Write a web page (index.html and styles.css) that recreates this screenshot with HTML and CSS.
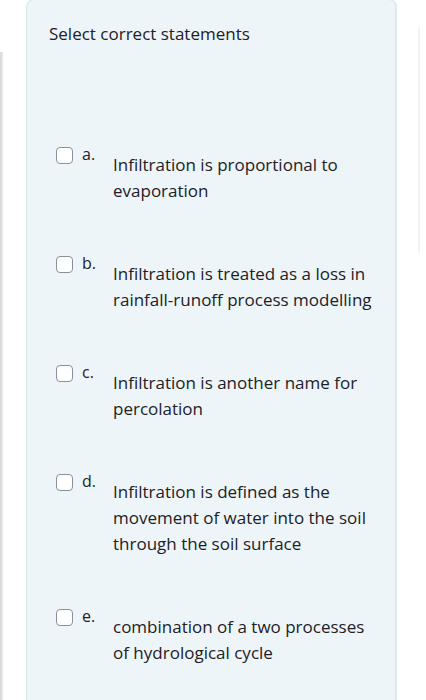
FILE: index.html
```html
<!DOCTYPE html>
<html>
<head>
<meta charset="utf-8">
<link rel="stylesheet" href="styles.css">
</head>
<body>
<div class="page">
  <div class="left-strip"></div>
  <div class="card">
    <div class="question">Select correct statements</div>
    <div class="answers">
      <div class="option">
        <span class="box"></span>
        <span class="letter">a.</span>
        <div class="text">Infiltration is proportional to evaporation</div>
      </div>
      <div class="option">
        <span class="box"></span>
        <span class="letter">b.</span>
        <div class="text">Infiltration is treated as a loss in rainfall-runoff process modelling</div>
      </div>
      <div class="option">
        <span class="box"></span>
        <span class="letter">c.</span>
        <div class="text">Infiltration is another name for percolation</div>
      </div>
      <div class="option">
        <span class="box"></span>
        <span class="letter">d.</span>
        <div class="text">Infiltration is defined as the movement of water into the soil through the soil surface</div>
      </div>
      <div class="option">
        <span class="box"></span>
        <span class="letter">e.</span>
        <div class="text">combination of a two processes of hydrological cycle</div>
      </div>
    </div>
  </div>
  <div class="right-strip"></div>
</div>
</body>
</html>
```
FILE: styles.css
```css
html, body {
  margin: 0;
  padding: 0;
  background: #ffffff;
  height: 700px;
  overflow: hidden;
}
.page {
  display: flex;
  align-items: flex-start;
  font-family: "Open Sans", "Noto Sans", sans-serif;
  color: #1d2125;
}
.left-strip {
  width: 3px;
  height: 660px;
  margin-top: 52px;
  background: linear-gradient(to right, #d6d6d6, #ebebeb);
}
.card {
  margin-left: 23px;
  margin-top: -1px;
  width: 371px;
  height: 760px;
  box-sizing: border-box;
  background: #edf5f9;
  border: 1px solid #d5e8f0;
  border-right: 2px solid #d8eaf2;
  border-radius: 8px;
  padding: 22px 0 0 22px;
}
.question {
  font-size: 17px;
  line-height: 24px;
}
.answers {
  margin-top: 99px;
  padding-left: 7px;
}
.option {
  display: flex;
  align-items: flex-start;
  margin-bottom: 50px;
}
.box {
  flex: none;
  width: 17px;
  height: 17px;
  box-sizing: border-box;
  margin-top: 2px;
  border: 1.5px solid #8a9099;
  border-radius: 4px;
  background: #ffffff;
}
.letter {
  flex: none;
  width: 31px;
  margin-left: 9px;
  font-size: 16px;
  line-height: 18px;
}
.text {
  width: 266px;
  padding-top: 7px;
  font-size: 17px;
  line-height: 26px;
}
.right-strip {
  width: 2px;
  height: 226px;
  margin-top: 27px;
  margin-left: 21px;
  background: #f2f2f2;
}
```
